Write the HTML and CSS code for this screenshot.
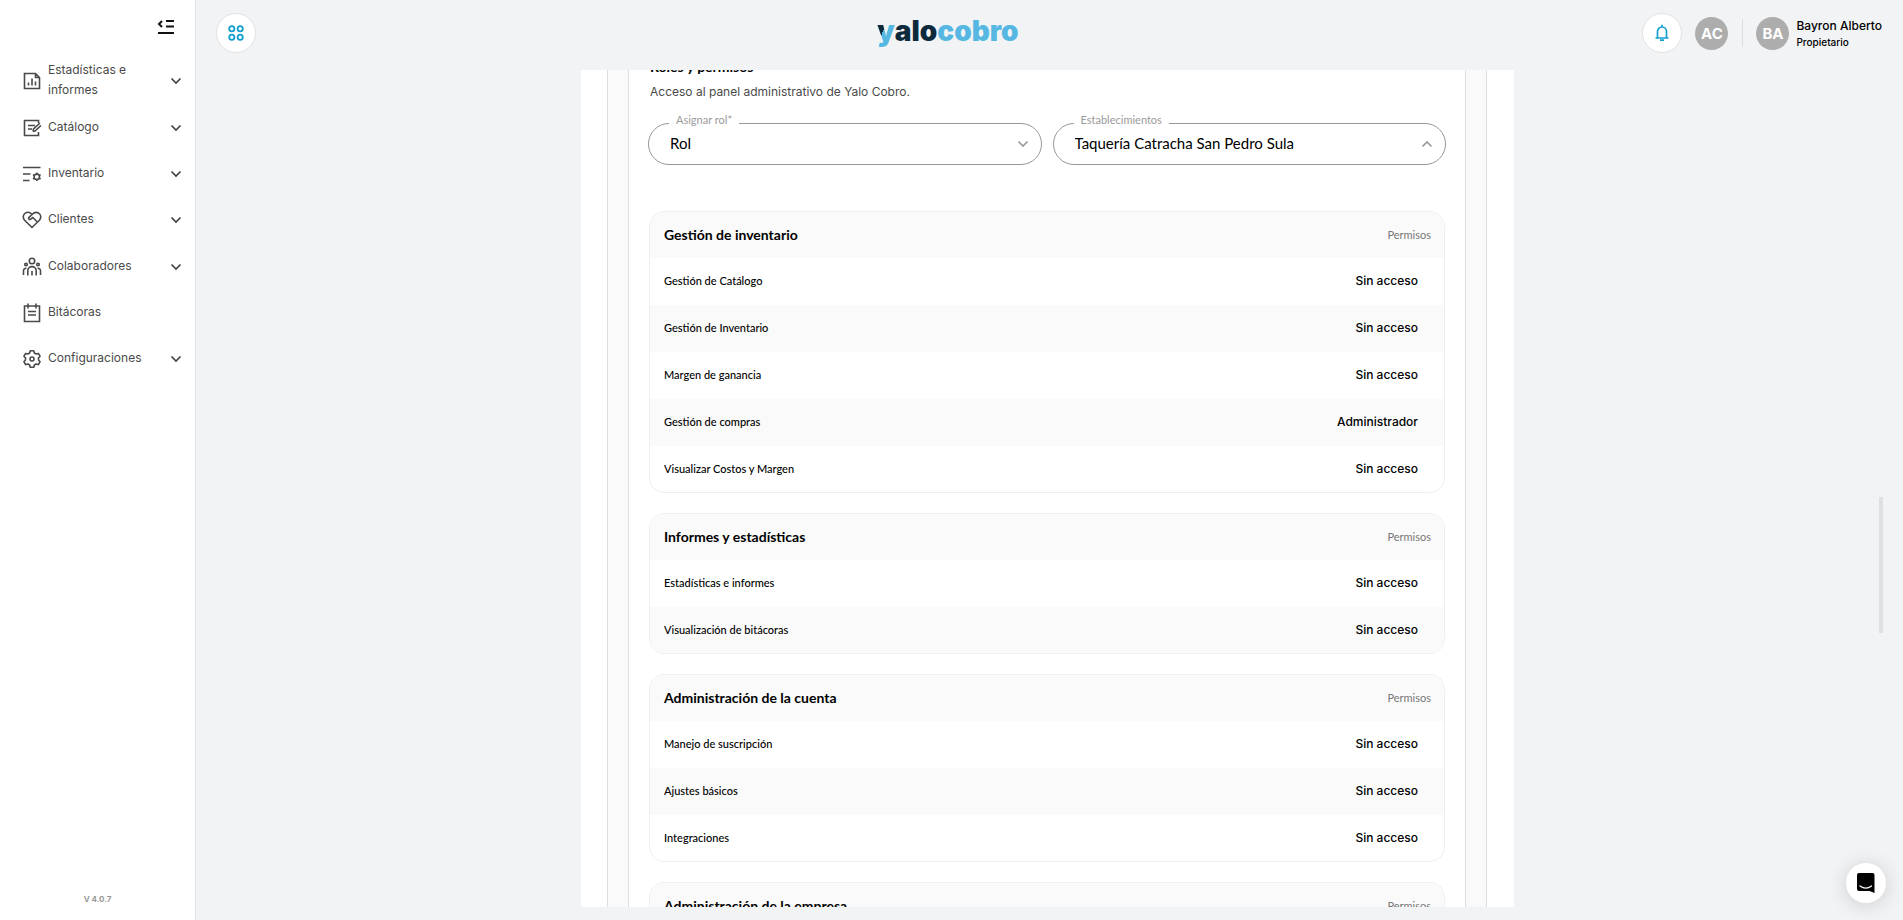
FILE: index.html
```html
<!DOCTYPE html>
<html lang="es">
<head>
<meta charset="utf-8">
<title>Yalo Cobro</title>
<link rel="stylesheet" href="styles.css">
</head>
<body>
<svg class="defs" aria-hidden="true">
  <symbol id="chevron" viewBox="0 0 12 8"><path d="M1.500 1.500 6 6l4.500-4.500" fill="none" stroke="currentColor" stroke-width="1.700"/></symbol>
</svg>
<div class="app">
  <aside class="sidebar">
    <button class="collapse" type="button" aria-label="Contraer menú">
      <svg width="18" height="16" viewBox="0 0 18 16" fill="none" stroke="#111" stroke-width="2"><path d="M9 2h8M9 7.500h8M1 14h16M5 2 2 5l3 3"/></svg>
    </button>
    <nav class="menu">
      <button class="item" type="button">
        <svg class="icon" viewBox="0 0 20 20"><path d="M2.500 2.500h11l4 4v11h-15zM13.500 2.500v4h4M6.500 14.500v-3M10 14.500v-7M13.500 14.500v-4"/></svg>
        <span>Estadísticas e informes</span><svg class="arrow"><use href="#chevron"/></svg>
      </button>
      <button class="item" type="button">
        <svg class="icon" viewBox="0 0 20 20"><path d="M16.500 5V2.500h-14v15h14V14M6 7.500h7M6 11h4M11 13.500l.500-2.500 6.500-6M11 13.500l2-.500 6-5.500"/></svg>
        <span>Catálogo</span><svg class="arrow"><use href="#chevron"/></svg>
      </button>
      <button class="item" type="button">
        <svg class="icon" viewBox="0 0 20 20"><path d="M1 3.500h17.500M1 10h7.500M1 16.500h6.500"/><circle cx="14.800" cy="12.800" r="2.700"/><path d="M14.800 8.500v1.600M14.800 15.500v1.600M11 10.600l1.500.900M17.100 14.100l1.500.900M11 15l1.500-.900M17.100 11.500l1.500-.900"/></svg>
        <span>Inventario</span><svg class="arrow"><use href="#chevron"/></svg>
      </button>
      <button class="item" type="button">
        <svg class="icon" viewBox="0 0 20 20"><path d="M10 17.500 2.600 10.200C.600 8 .900 4.800 3 3.300 5.200 1.800 8 2.300 10 4.500c2-2.200 4.800-2.700 7-1.200 2.100 1.500 2.400 4.700.400 6.900zM10 4.500 6.800 7.600c-.600 1 .700 2.400 2 1.600l2-1.700 4.500 4.500M8 15.500l-1-1"/></svg>
        <span>Clientes</span><svg class="arrow"><use href="#chevron"/></svg>
      </button>
      <button class="item" type="button">
        <svg class="icon" viewBox="0 0 20 20"><circle cx="10" cy="4" r="2.700"/><circle cx="4" cy="7.500" r="1.300"/><circle cx="16" cy="7.500" r="1.300"/><path d="M5.800 18.500v-4.700a4.200 4.200 0 0 1 8.400 0v4.700M10 14v4.500M1.500 18v-4.300a2.500 2.500 0 0 1 3-2.400M18.500 18v-4.300a2.500 2.500 0 0 0-3-2.400"/></svg>
        <span>Colaboradores</span><svg class="arrow"><use href="#chevron"/></svg>
      </button>
      <button class="item" type="button">
        <svg class="icon" viewBox="0 0 20 20"><path d="M2.500 3h15v15.500h-15zM6 .500V5.500M14 .500V5.500M6 8.500h8M6 12h8"/></svg>
        <span>Bitácoras</span>
      </button>
      <button class="item" type="button">
        <svg class="icon" viewBox="0 0 20 20"><path d="M8.300 1.700h3.400l.700 2.300 1.700 1 2.300-.600 1.700 2.900-1.600 1.700v2l1.600 1.700-1.700 2.900-2.300-.600-1.700 1-.700 2.300H8.300L7.600 16l-1.700-1-2.300.600-1.700-2.900L3.500 11V9L1.900 7.300l1.700-2.900 2.300.600 1.700-1z" stroke-linejoin="round"/><circle cx="10" cy="10" r="2"/></svg>
        <span>Configuraciones</span><svg class="arrow"><use href="#chevron"/></svg>
      </button>
    </nav>
    <p class="version">V 4.0.7</p>
  </aside>

  <div class="main">
    <header class="topbar">
      <button class="round" type="button" aria-label="Aplicaciones">
        <svg width="16" height="16" viewBox="0 0 16 16" fill="none" stroke="#159fce" stroke-width="1.800"><circle cx="3.800" cy="3.800" r="2.600"/><circle cx="12.200" cy="3.800" r="2.600"/><circle cx="3.800" cy="12.200" r="2.600"/><circle cx="12.200" cy="12.200" r="2.600"/></svg>
      </button>
      <div class="logo"><span class="logo-y">y</span><span class="logo-dark">alo</span><span class="logo-blue">cobro</span></div>
      <div class="account">
        <button class="round" type="button" aria-label="Notificaciones">
          <svg width="14" height="18" viewBox="0 0 14 18" fill="none" stroke="#159fce" stroke-width="1.700"><path d="M.500 14h13M2.500 14V7.500a4.500 4.500 0 0 1 9 0V14M7 3V.800M5 16.200h4"/></svg>
        </button>
        <span class="avatar">AC</span>
        <span class="divider"></span>
        <span class="avatar">BA</span>
        <div class="user"><span class="user-name">Bayron Alberto</span><span class="user-role">Propietario</span></div>
      </div>
    </header>

    <main class="page">
      <div class="outer">
        <div class="inner">
          <h2 class="title">Roles y permisos</h2>
          <p class="lead">Acceso al panel administrativo de Yalo Cobro.</p>
          <div class="fields">
            <div class="field">
              <label for="role">Asignar rol*</label>
              <select id="role"><option>Rol</option></select>
              <svg class="field-arrow"><use href="#chevron"/></svg>
            </div>
            <div class="field">
              <label for="place">Establecimientos</label>
              <select id="place"><option>Taquería Catracha San Pedro Sula</option></select>
              <svg class="field-arrow up"><use href="#chevron"/></svg>
            </div>
          </div>

          <div class="cards">
            <div class="card"><table>
              <thead><tr><th scope="col">Gestión de inventario</th><th scope="col">Permisos</th></tr></thead>
              <tbody>
                <tr><td>Gestión de Catálogo</td><td>Sin acceso</td></tr>
                <tr><td>Gestión de Inventario</td><td>Sin acceso</td></tr>
                <tr><td>Margen de ganancia</td><td>Sin acceso</td></tr>
                <tr><td>Gestión de compras</td><td>Administrador</td></tr>
                <tr><td>Visualizar Costos y Margen</td><td>Sin acceso</td></tr>
              </tbody>
            </table></div>
            <div class="card"><table>
              <thead><tr><th scope="col">Informes y estadísticas</th><th scope="col">Permisos</th></tr></thead>
              <tbody>
                <tr><td>Estadísticas e informes</td><td>Sin acceso</td></tr>
                <tr><td>Visualización de bitácoras</td><td>Sin acceso</td></tr>
              </tbody>
            </table></div>
            <div class="card"><table>
              <thead><tr><th scope="col">Administración de la cuenta</th><th scope="col">Permisos</th></tr></thead>
              <tbody>
                <tr><td>Manejo de suscripción</td><td>Sin acceso</td></tr>
                <tr><td>Ajustes básicos</td><td>Sin acceso</td></tr>
                <tr><td>Integraciones</td><td>Sin acceso</td></tr>
              </tbody>
            </table></div>
            <div class="card"><table>
              <thead><tr><th scope="col">Administración de la empresa</th><th scope="col">Permisos</th></tr></thead>
            </table></div>
          </div>
        </div>
      </div>
    </main>
  </div>
</div>
<div class="scroll-thumb"></div>
<button class="chat" type="button" aria-label="Abrir chat">
  <svg width="20" height="22" viewBox="0 0 20 22"><path d="M3 1h13.500a2 2 0 0 1 2 2v18l-5-2H3a2 2 0 0 1-2-2V3a2 2 0 0 1 2-2z" fill="#000"/><path d="M4 14c3.500 2.600 8 2.600 11.500 0" fill="none" stroke="#fff" stroke-width="1.300" stroke-linecap="round"/></svg>
</button>
</body>
</html>
```

FILE: styles.css
```css
* { box-sizing: border-box; }
body {
  margin: 0;
  background: #f2f3f5;
  color: #000;
  font-family: Lato, "Liberation Sans", sans-serif;
}
button { border: 0; padding: 0; background: none; font: inherit; color: inherit; cursor: pointer; }
.defs { display: none; }
.app { display: flex; height: 100vh; }

/* Sidebar */
.sidebar {
  flex: 0 0 196px;
  display: flex;
  flex-direction: column;
  background: #fff;
  border-right: 1px solid #e3e4e6;
}
.collapse { align-self: flex-end; height: 16px; margin: 19px 20px 0 0; }
.collapse svg { display: block; }
.menu {
  display: flex;
  flex-direction: column;
  justify-content: space-between;
  min-height: 319px;
  margin-top: 25px;
}
.item {
  display: flex;
  align-items: center;
  gap: 6px;
  width: 100%;
  min-height: 40px;
  padding: 0 13px 0 22px;
  color: #4a4a4a;
  font-family: Inter, sans-serif;
  font-size: 12px;
  line-height: 20px;
  text-align: left;
}
.item span { flex: 1; padding-bottom: 2px; }
.icon { flex: none; width: 20px; height: 20px; fill: none; stroke: currentColor; stroke-width: 1.600; }
.arrow { flex: none; width: 12px; height: 8px; color: #444; }
.version { margin: auto 0 14px; text-align: center; color: #999; font: 700 8px/14px Inter, sans-serif; }

/* Top bar */
.main { flex: 1; min-width: 0; display: flex; flex-direction: column; padding-bottom: 13px; }
.topbar {
  flex: 0 0 70px;
  display: grid;
  grid-template-columns: 1fr auto calc(50vw - 88px);
  align-items: center;
  padding: 0 20px 4px;
}
.round {
  display: flex;
  align-items: center;
  justify-content: center;
  width: 40px;
  height: 40px;
  border: 1px solid #e1e2e4;
  border-radius: 50%;
  background: #fff;
}
.logo { font: 900 28px/36px Inter, sans-serif; padding-bottom: 4px; color: #0c2a3c; }
.logo-blue { color: #56b8e2; }
.logo-y {
  background: linear-gradient(110deg, #0c2a3c 40%, #56b8e2 40%);
  background-clip: text;
  -webkit-background-clip: text;
  color: transparent;
}
.account { display: flex; align-items: center; justify-content: flex-end; }
.avatar {
  width: 33px;
  height: 33px;
  margin-left: 13px;
  border-radius: 50%;
  background: #adadad;
  color: #fff;
  font-family: Inter, sans-serif;
  font-size: 15px;
  font-weight: 700;
  line-height: 33px;
  text-align: center;
}
.divider { width: 1px; height: 28px; margin-left: 14px; background: #dcdde0; }
.user { display: flex; flex-direction: column; margin-left: 7px; padding-top: 2px; font-family: Inter, sans-serif; font-weight: 500; line-height: 17px; }
.user-name { font-size: 12px; }
.user-role { font-size: 10px; }

/* Scrolled page */
.main { padding-right: 4px; }
.topbar { padding-right: 17px; }
.page {
  flex: 1;
  min-height: 0;
  overflow: hidden;
  width: 933px;
  max-width: 100%;
  margin: 0 auto;
  padding: 0 27px 0 26px;
  background: #fff;
}
.outer { padding: 0 20px; background: #fafafa; border: solid #dedede; border-width: 0 1px; }
.inner { padding: 0 19px; background: #fff; border: solid #dedede; border-width: 0 1px; }
.title { margin: -15px 0 0; padding-left: 2px; font-size: 14px; line-height: 24px; }
.lead { margin: 3px 0 0; padding-left: 2px; color: #4a4a4a; font-family: Inter, sans-serif; font-size: 12px; line-height: 20px; }
.fields { display: grid; grid-template-columns: 1fr 1fr; gap: 11px; margin-top: 21px; }
.field { position: relative; }
.field label {
  position: absolute;
  top: -10px;
  left: 21px;
  padding: 0 7px;
  background: #fff;
  color: #9a9a9a;
  font-size: 11px;
  line-height: 14px;
}
.field select {
  display: block;
  width: 100%;
  height: 42px;
  padding: 0 40px 2px 21px;
  border: 1px solid #999;
  border-radius: 21px;
  background: #fff;
  color: #000;
  font: 15px Lato, sans-serif;
  appearance: none;
}
.field-arrow { position: absolute; top: 17px; right: 13px; width: 12px; height: 8px; color: #9a9a9a; pointer-events: none; }
.up { transform: rotate(180deg); }

.cards { display: flex; flex-direction: column; gap: 20px; margin: 46px 1px 0; }
.card { border: 1px solid #efefef; border-radius: 15px; overflow: hidden; }
table { width: 100%; border-collapse: collapse; }
tr { height: 47px; }
thead tr, tbody tr:last-child { height: 46px; }
thead tr, tbody tr:nth-child(even) { background: #fafafa; }
th, td { padding: 0 14px 2px; text-align: left; font-size: 11px; font-weight: 500; }
th:first-child { font-size: 14px; font-weight: 700; }
th:last-child { color: #777; font-weight: 400; text-align: right; padding-right: 13px; }
td:last-child { padding-right: 26px; font-family: Inter, sans-serif; font-size: 12px; text-align: right; }

.scroll-thumb { position: fixed; right: 20px; top: 497px; width: 4px; height: 136px; background: #dfe0e2; }
.chat {
  position: fixed;
  right: 17px;
  bottom: 17px;
  display: flex;
  align-items: center;
  justify-content: center;
  width: 40px;
  height: 40px;
  border-radius: 50%;
  background: #fff;
  box-shadow: 0 2px 20px rgba(0, 0, 0, .16);
}
```
